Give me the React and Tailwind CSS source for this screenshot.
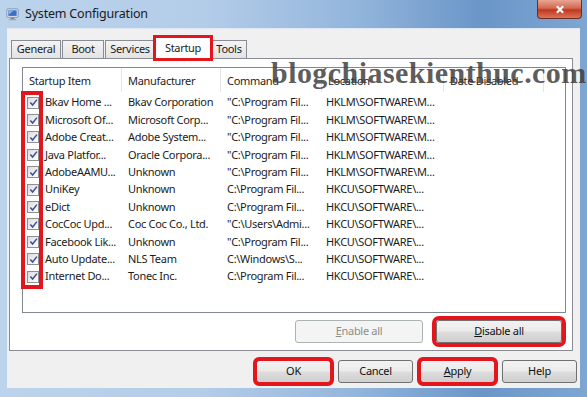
const rows = [
  ['Bkav Home ...', 'Bkav Corporation', '"C:\\Program Fil...', 'HKLM\\SOFTWARE\\M...'],
  ['Microsoft Of...', 'Microsoft Corp...', '"C:\\Program Fil...', 'HKLM\\SOFTWARE\\M...'],
  ['Adobe Creat...', 'Adobe System...', '"C:\\Program Fil...', 'HKLM\\SOFTWARE\\M...'],
  ['Java Platfor...', 'Oracle Corpora...', '"C:\\Program Fil...', 'HKLM\\SOFTWARE\\M...'],
  ['AdobeAAMU...', 'Unknown', '"C:\\Program Fil...', 'HKLM\\SOFTWARE\\M...'],
  ['UniKey', 'Unknown', 'C:\\Program Fil...', 'HKCU\\SOFTWARE\\...'],
  ['eDict', 'Unknown', 'C:\\Program Fil...', 'HKCU\\SOFTWARE\\...'],
  ['CocCoc Upd...', 'Coc Coc Co., Ltd.', '"C:\\Users\\Admi...', 'HKCU\\SOFTWARE\\...'],
  ['Facebook Lik...', 'Unknown', '"C:\\Program Fil...', 'HKCU\\SOFTWARE\\...'],
  ['Auto Update...', 'NLS Team', 'C:\\Windows\\S...', 'HKCU\\SOFTWARE\\...'],
  ['Internet Do...', 'Tonec Inc.', 'C:\\Program Fil...', 'HKCU\\SOFTWARE\\...'],
]

const cols = 'grid grid-cols-[99px_99px_101px_122px_100px_1fr]'

function Check() {
  return (
    <span className="w-[12px] h-[12px] shrink-0 border border-[#8e8f8f] bg-[linear-gradient(135deg,#dcdcdc,#ffffff)] flex items-center justify-center">
      <svg viewBox="0 0 10 10" className="w-[9px] h-[9px]">
        <path d="M1.5 5 L4 7.8 L8.8 1.8" stroke="#3d4f9c" strokeWidth="1.7" fill="none" />
      </svg>
    </span>
  )
}

function Button({ children, className = '', disabled }) {
  return (
    <div
      className={
        'h-[23px] flex items-center justify-center rounded-[3px] border ' +
        (disabled
          ? 'border-[#adb2b5] bg-[#f4f4f4] text-[#8d8d8d] '
          : 'border-[#707070] bg-[linear-gradient(#f2f2f2_0%,#ebebeb_48%,#dddddd_52%,#cfcfcf_100%)] text-[#111] ') +
        className
      }
    >
      {children}
    </div>
  )
}

function Tab({ label, w, active }) {
  if (active) {
    return (
      <div className={`${w} h-[22px] -mb-px relative z-10 bg-white border border-b-0 border-[#898c95] flex items-start justify-center pt-[2px] outline-3 outline-[#e3161e] -outline-offset-1`}>
        {label}
      </div>
    )
  }
  return (
    <div className={`${w} h-[18px] border border-b-0 border-[#898c95] bg-[linear-gradient(#f3f3f3,#e3e3e3)] flex items-center justify-center`}>
      {label}
    </div>
  )
}

export default function App() {
  return (
    <div className="relative w-[587px] h-[397px] overflow-hidden flex flex-col bg-[linear-gradient(to_right,#bcd3ec_0%,#b3cce8_35%,#94b6dc_60%,#6a96c8_82%,#7ea6d2_100%)] font-['Noto_Sans',sans-serif] text-[11px] tracking-[-0.3px] text-[#1b1b1b]">
      {/* Title bar */}
      <div className="h-[28px] shrink-0 flex items-center pl-[6px] relative">
        <svg viewBox="0 0 14 14" className="w-[13px] h-[13px]">
          <rect x="1" y="1" width="12" height="9" rx="1" fill="#e8eef6" stroke="#6b7a90" strokeWidth="0.8" />
          <rect x="2.5" y="2.5" width="9" height="6" fill="#3a6fc4" />
          <path d="M3 3 L8 3 L3 7 Z" fill="#8fb5ec" />
          <rect x="5" y="10.5" width="4" height="1.5" fill="#7b8594" />
          <rect x="3" y="12" width="8" height="1.2" fill="#9aa3b0" />
        </svg>
        <span className="ml-[6px] text-[12.5px] text-[#1a1a1a] tracking-[-0.2px]">System Configuration</span>
        <div className="absolute right-[5px] top-0 w-[45px] h-[19px] rounded-b-[4px] border border-t-0 border-[#6e2c26] bg-[linear-gradient(#e9a592_0%,#d26a52_45%,#c2371f_55%,#d8755b_100%)] flex items-center justify-center">
          <svg viewBox="0 0 10 10" className="w-[10px] h-[9px]">
            <path d="M1.5 1.5 L8.5 8.5 M8.5 1.5 L1.5 8.5" stroke="#fff" strokeWidth="2.4" />
          </svg>
        </div>
      </div>

      {/* Client area */}
      <div className="h-[360px] mx-[7px] bg-[#f0f0f0] flex flex-col border-t border-[#dfe8f2]">
        {/* Tabs */}
        <div className="h-[29px] shrink-0 flex items-end pl-[4px]">
          <Tab label="General" w="w-[50px]" />
          <Tab label="Boot" w="w-[42px] ml-px" />
          <Tab label="Services" w="w-[50px] ml-px" />
          <Tab label="Startup" w="w-[56px]" active />
          <Tab label="Tools" w="w-[36px]" />
        </div>

        {/* Tab panel */}
        <div className="h-[293px] ml-[2px] mr-[7px] bg-white border border-[#898c95] flex flex-col pt-[8px] pl-[12px] pr-[6px]">
          <div className="h-[246px] border border-[#828790] bg-white flex flex-col">
            <div className={`${cols} h-[24px] shrink-0 text-[#1e1e1e]`}>
              {['Startup Item', 'Manufacturer', 'Command', 'Location', 'Date Disabled', ''].map((h, i) => (
                <div key={i} className="border-r border-[#e5e5e5] flex items-center pl-[6px] pt-[3px] last:border-r-0">
                  {h}
                </div>
              ))}
            </div>
            <div className="relative pt-[2px]">
              {rows.map((r, i) => (
                <div key={i} className={`${cols} h-[17.4px] items-center`}>
                  <div className="flex items-center pl-[4px] gap-[6px]">
                    <Check />
                    <span>{r[0]}</span>
                  </div>
                  <div className="pl-[6px]">{r[1]}</div>
                  <div className="pl-[6px]">{r[2]}</div>
                  <div className="pl-[4px]">{r[3]}</div>
                  <div />
                  <div />
                </div>
              ))}
              <div className="absolute left-[-2px] top-[-1px] w-[22px] h-[198px] border-4 border-[#e3161e]" />
            </div>
          </div>

          <div className="flex justify-end gap-[13px] pr-[4px] mt-[7px]">
            <Button disabled className="w-[128px]">
              <span><span className="underline">E</span>nable all</span>
            </Button>
            <Button className="w-[126px] outline-4 outline-[#e3161e] outline-offset-0">
              <span><span className="underline">D</span>isable all</span>
            </Button>
          </div>
        </div>

        {/* Dialog buttons */}
        <div className="flex justify-end gap-[7px] mt-[9px]">
          <Button className="w-[75px] outline-4 outline-[#e3161e] -outline-offset-1">OK</Button>
          <Button className="w-[75px]">Cancel</Button>
          <Button className="w-[75px] outline-4 outline-[#e3161e] -outline-offset-1">
            <span><span className="underline">A</span>pply</span>
          </Button>
          <Button className="w-[75px] mr-[3px]">Help</Button>
        </div>
      </div>

      {/* Watermark */}
      <div className="absolute left-[271px] top-[58px] font-['Liberation_Serif',serif] font-bold text-[30px] leading-none tracking-[0.45px] text-[#3f3f3f]/85 whitespace-nowrap">
        blogchiasekienthuc.com
      </div>
    </div>
  )
}
